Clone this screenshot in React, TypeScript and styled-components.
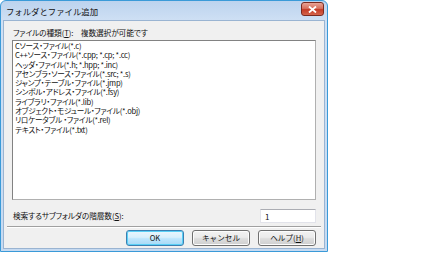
import styled, { createGlobalStyle } from "styled-components";

const fileTypes = [
  "Cソース・ファイル(*.c)",
  "C++ソース・ファイル(*.cpp; *.cp; *.cc)",
  "ヘッダ・ファイル(*.h; *.hpp; *.inc)",
  "アセンブラ・ソース・ファイル(*.src; *.s)",
  "ジャンプ・テーブル・ファイル(*.jmp)",
  "シンボル・アドレス・ファイル(*.fsy)",
  "ライブラリ・ファイル(*.lib)",
  "オブジェクト・モジュール・ファイル(*.obj)",
  "リロケータブル ・ファイル(*.rel)",
  "テキスト・ファイル(*.txt)",
];

function App() {
  return (
    <>
      <GlobalStyle />
      <Window>
        <TitleBar>
          <Title>フォルダとファイル追加</Title>
          <CloseButton aria-label="close">
            <svg width="9" height="7" viewBox="0 0 9 7">
              <path d="M1 0.5 L8 6.5 M8 0.5 L1 6.5" stroke="#ffffff" strokeWidth="1.8" />
            </svg>
          </CloseButton>
        </TitleBar>
        <Body>
          <Label>
            ファイルの種類(<u>T</u>):　複数選択が可能です
          </Label>
          <ListBox>
            {fileTypes.map((t) => (
              <ListItem key={t}>{t}</ListItem>
            ))}
          </ListBox>
          <DepthRow>
            <Label>
              検索するサブフォルダの階層数(<u>S</u>):
            </Label>
            <DepthInput defaultValue="1" />
          </DepthRow>
          <Separator />
          <ButtonRow>
            <Button $default>OK</Button>
            <Button>キャンセル</Button>
            <Button>
              ヘルプ(<u>H</u>)
            </Button>
          </ButtonRow>
        </Body>
      </Window>
    </>
  );
}

export default App;

const GlobalStyle = createGlobalStyle`
  body {
    margin: 0;
    background: #ffffff;
    font-family: "Noto Sans CJK JP", "Noto Sans", sans-serif;
    font-feature-settings: "palt";
  }
`;

const Window = styled.div`
  width: 322px;
  height: 248px;
  border: 1px solid #3a9ad8;
  border-radius: 6px 6px 0 0;
  background: linear-gradient(to bottom, #bcd3ee 0px, #cfe0f4 20px, #c6daf1 100%);
  padding: 0 2px 2px 2px;
  box-sizing: content-box;
  display: flex;
  flex-direction: column;
`;

const TitleBar = styled.div`
  height: 19px;
  display: flex;
  align-items: center;
  justify-content: space-between;
  padding-left: 3px;
`;

const Title = styled.span`
  font-size: 8.4px;
  color: #111111;
  font-feature-settings: normal;
`;

const CloseButton = styled.div`
  width: 21px;
  height: 12px;
  margin-top: -3px;
  margin-right: 1px;
  border: 1px solid #7a2a20;
  border-radius: 3px;
  background: linear-gradient(to bottom, #e8a496 0%, #d7705e 45%, #c43c26 55%, #d4644c 100%);
  display: flex;
  align-items: center;
  justify-content: center;
`;

const Body = styled.div`
  flex: 1;
  background: #f0f0f0;
  border: 1px solid #9ab4d2;
  padding: 7px 8px 0 8px;
  display: flex;
  flex-direction: column;
`;

const Label = styled.div`
  font-size: 7.7px;
  line-height: 10px;
  color: #111111;
  padding-left: 1px;
  letter-spacing: -0.1px;

  u {
    text-underline-offset: 1px;
  }
`;

const ListBox = styled.div`
  margin-top: 2px;
  height: 158px;
  background: #ffffff;
  border: 1px solid #b0b0b0;
  border-top-color: #828282;
  border-left-color: #828282;
  padding: 0 2px;
`;

const ListItem = styled.div`
  font-size: 7.6px;
  line-height: 9.3px;
  height: 9.3px;
  color: #111111;
  white-space: nowrap;
  letter-spacing: -0.25px;
`;

const DepthRow = styled.div`
  margin-top: 9px;
  display: flex;
  align-items: center;
  justify-content: space-between;
`;

const DepthInput = styled.input`
  width: 56px;
  height: 14px;
  box-sizing: border-box;
  border: 1px solid #e2e3ea;
  border-top-color: #abadb3;
  background: #ffffff;
  font-family: "Noto Sans CJK JP", sans-serif;
  font-size: 8px;
  padding: 0 4px;
  color: #111111;
  outline: none;
`;

const Separator = styled.div`
  margin: 3px -5px 0 -5px;
  height: 0;
  border-top: 1px solid #a0a0a0;
  border-bottom: 1px solid #ffffff;
`;

const ButtonRow = styled.div`
  margin-top: 2px;
  display: flex;
  justify-content: flex-end;
  gap: 8px;
`;

const Button = styled.button<{ $default?: boolean }>`
  width: 58px;
  height: 16px;
  padding: 0;
  border-radius: 3px;
  border: 1px solid ${(p) => (p.$default ? "#3c7fb1" : "#707070")};
  background: ${(p) =>
    p.$default
      ? "linear-gradient(to bottom, #eaf6fd 0%, #d9f0fc 45%, #bee6fd 55%, #a7d9f5 100%)"
      : "linear-gradient(to bottom, #f2f2f2 0%, #ebebeb 45%, #dddddd 55%, #cfcfcf 100%)"};
  box-shadow: inset 0 0 0 1px ${(p) => (p.$default ? "#5ad0f6" : "#fcfcfc")};
  font-family: "Noto Sans CJK JP", sans-serif;
  font-size: 7.6px;
  color: #111111;
  line-height: 1;

  u {
    text-underline-offset: 1px;
  }
`;
